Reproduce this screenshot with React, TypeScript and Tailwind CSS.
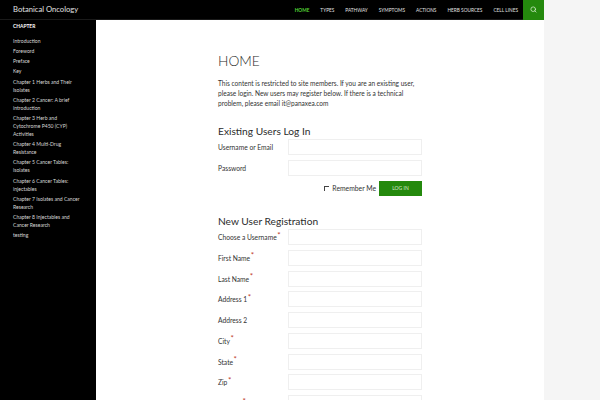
import { Search } from "lucide-react";

const nav = ["HOME", "TYPES", "PATHWAY", "SYMPTOMS", "ACTIONS", "HERB SOURCES", "CELL LINES"];
const chapters = [
  "Introduction",
  "Foreword",
  "Preface",
  "Key",
  "Chapter 1 Herbs and Their Isolates",
  "Chapter 2 Cancer: A brief introduction",
  "Chapter 3 Herb and Cytochrome P450 (CYP) Activities",
  "Chapter 4 Multi-Drug Resistance",
  "Chapter 5 Cancer Tables: isolates",
  "Chapter 6 Cancer Tables: injectables",
  "Chapter 7 Isolates and Cancer Research",
  "Chapter 8 Injectables and Cancer Research",
  "testing",
];
const fields: [string, boolean][] = [
  ["Choose a Username", true],
  ["First Name", true],
  ["Last Name", true],
  ["Address 1", true],
  ["Address 2", false],
  ["City", true],
  ["State", true],
  ["Zip", true],
  ["Country", true],
];

function Row({ label, req }: { label: string; req?: boolean }) {
  return (
    <div className="flex h-[16px] items-center">
      <div className="flex w-[69.5px] shrink-0 items-start whitespace-nowrap text-[6.7px] leading-[10px] text-[#333]">
        {label}
        {req && <span className="-mt-[2.5px] ml-[0.5px] text-[8px] leading-[10px] text-[#c0392b]">*</span>}
      </div>
      <div className="h-[16px] flex-1 border border-[#efefef] bg-white" />
    </div>
  );
}

export default function App() {
  return (
    <div className="h-[400px] w-[600px] overflow-hidden bg-[#f5f5f5] font-['Lato','Liberation_Sans',sans-serif]">
      <div className="w-[544px]">
        <header className="flex h-[20px] items-center justify-between border-b border-[#1a1a1a] bg-black">
          <div className="pl-[13px] pt-[1px] text-[7.65px] text-[#e0e0e0]">Botanical Oncology</div>
          <div className="flex h-full items-center">
            <nav className="flex gap-[11px] pr-[5px] pt-[2px]">
              {nav.map((n, i) => (
                <span key={n} className={`text-[4.75px] leading-none ${i === 0 ? "font-bold text-[#55d737]" : "text-[#e0e0e0]"}`}>
                  {n}
                </span>
              ))}
            </nav>
            <div className="flex h-[20px] w-[21px] items-center justify-center bg-[#24890d]">
              <Search size={7} strokeWidth={2.5} className="text-[#d8f0d0]" />
            </div>
          </div>
        </header>
        <div className="flex h-[380px]">
          <aside className="w-[96px] shrink-0 bg-black pl-[13px] pr-[13px] pt-[2.5px] text-[#d8d8d8]">
            <div className="text-[4.9px] font-bold leading-[7px] text-white">CHAPTER</div>
            <ul className="mt-[8px] flex flex-col gap-[2.4px]">
              {chapters.map((c) => (
                <li key={c} className="text-[5.08px] leading-[7.9px]">
                  {c}
                </li>
              ))}
            </ul>
          </aside>
          <main className="flex-1 bg-white pl-[122px]">
            <div className="w-[204px]">
              <h1 className="mt-[33.5px] text-[13.8px] font-light leading-[14px] text-[#2b2b2b]">HOME</h1>
              <p className="mt-[11px] text-[6.55px] leading-[10.4px] text-[#333]">
                This content is restricted to site members. If you are an existing user, please login. New users may register below. If there is a technical problem, please email it@panaxea.com
              </p>
              <h2 className="mt-[14.3px] text-[10.2px] leading-[14px] text-[#2b2b2b]">Existing Users Log In</h2>
              <div className="mt-[1px] flex flex-col gap-[5px]">
                <Row label="Username or Email" />
                <Row label="Password" />
              </div>
              <div className="mt-[5px] flex items-center justify-end">
                <span className="mr-[3px] h-[5px] w-[5px] border-l border-t border-[#444]" />
                <span className="mr-[3px] text-[6.8px] text-[#333]">Remember Me</span>
                <button className="h-[15px] w-[43px] bg-[#24890d] text-[5px] text-[#d8e8d0]">LOG IN</button>
              </div>
              <h2 className="mt-[18px] text-[10.2px] leading-[14px] text-[#2b2b2b]">New User Registration</h2>
              <div className="mt-[1px] flex flex-col gap-[4.75px]">
                {fields.map(([l, r]) => (
                  <Row key={l} label={l} req={r} />
                ))}
              </div>
            </div>
          </main>
        </div>
      </div>
    </div>
  );
}
